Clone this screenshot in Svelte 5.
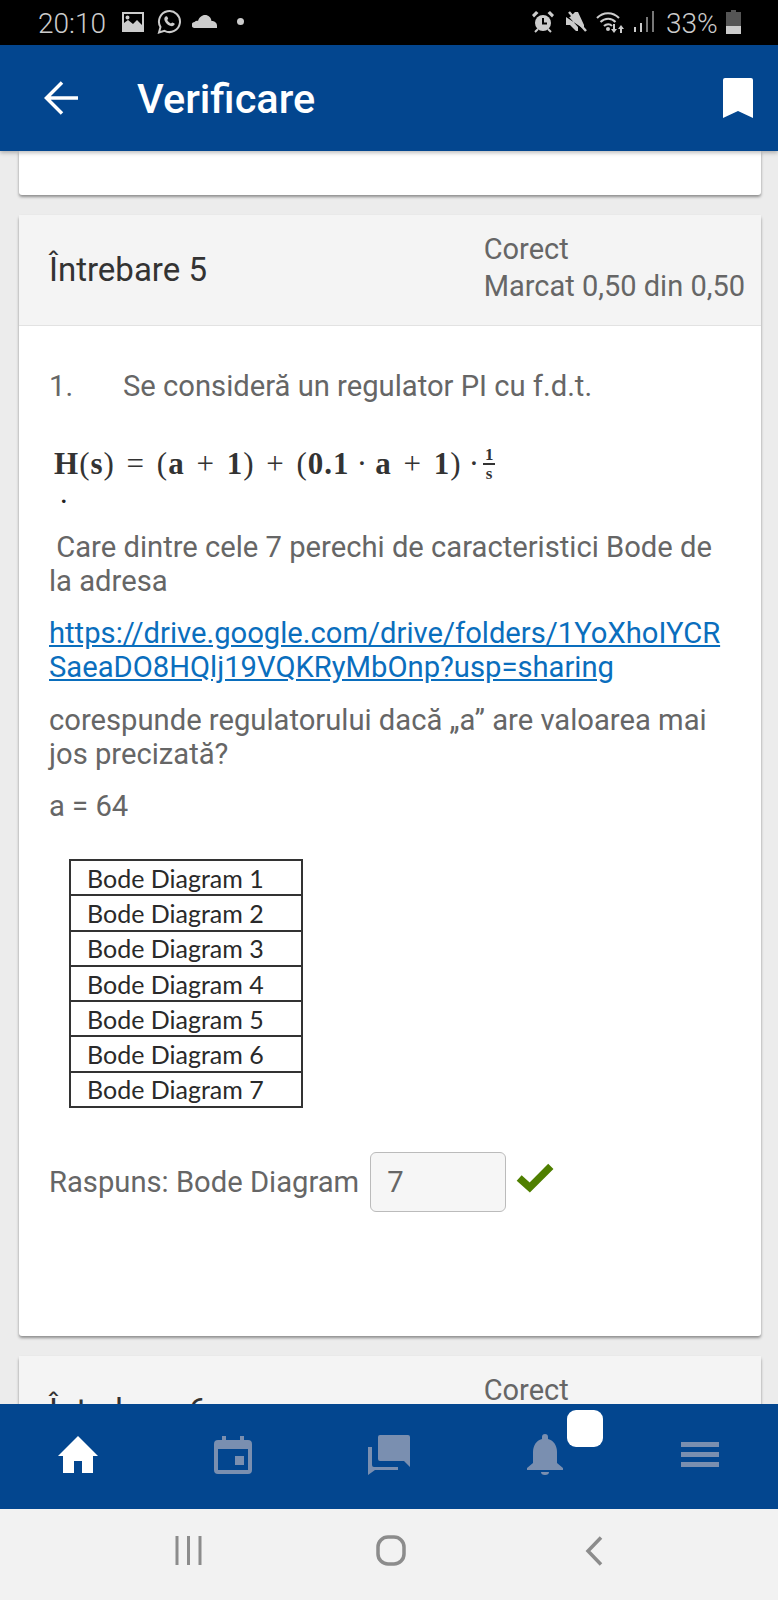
<script>
  const diagrams = [1, 2, 3, 4, 5, 6, 7];
</script>

<div class="phone">
  <div class="status">
    <span class="time">20:10</span>
    <svg class="st-img" viewBox="0 0 22 20"><path fill="#ccc" fill-rule="evenodd" d="M0 0h22v20H0zM2 2v9l4-3 5 4 4-4 5 5V2zM5.500 3.500a2 2 0 1 1 0 4 2 2 0 0 1 0-4z"/></svg>
    <svg class="st-wa" viewBox="0 0 24 24"><path fill="none" stroke="#ccc" stroke-width="2" d="M2 22.500l1.500-5.500A10.500 10.500 0 1 1 7.500 20.800z"/><path fill="#ccc" d="M8.500 6.500c1-.6 1.600-.4 2 .6l.7 1.600-1 1.400c.8 1.500 2 2.700 3.700 3.500l1.300-1.200 1.900.9c.7.4.7 1 .2 1.800-1 1.300-2.600 1.400-4.300.7-2.500-1-4.400-3-5.400-5.400-.6-1.600-.3-2.900.9-3.900z"/></svg>
    <svg class="st-cloud" viewBox="0 0 25 13"><path fill="#ccc" d="M3 13a3 3 0 0 1-.5-6C3.500 6 5 5.500 6 6c1-3.500 4-6 7-6 3.500 0 6 2.500 6.500 6 3-.3 5.500 2 5.500 4.500V13z"/></svg>
    <span class="st-dot"></span>
    <span class="grow"></span>
    <svg class="st-alarm" viewBox="0 0 22 22"><path fill="#ccc" d="M0 4l4-4 2.500 2-4.500 4.500zM22 4l-4-4-2.500 2 4.500 4.500z"/><circle cx="11" cy="12" r="8" fill="#ccc"/><path d="M3 21l3-3M19 21l-3-3" stroke="#ccc" stroke-width="2"/><path fill="none" stroke="#000" stroke-width="2" d="M11 7v5.500h4"/></svg>
    <svg class="st-mute" viewBox="0 0 21 21"><path fill="#ccc" d="M0 6h4l5-5h3l6 13v4zM0 6v8h4l6 6h2v-4L3 6z"/><path stroke="#ccc" stroke-width="2.500" d="M3 1l17 19"/></svg>
    <svg class="st-wifi" viewBox="0 0 31 22"><g fill="none" stroke="#ccc" stroke-width="2"><path d="M1 7c6-6.500 16-6.500 22 0M4.500 11c4.500-4.500 11-4.500 15 0M8 15c2.500-2.500 6-2.500 8 0"/></g><circle cx="12" cy="18" r="2" fill="#ccc"/><path fill="#ccc" d="M17 13h2v5h2l-3 4-3-4h2zM25 14l3 4h-2v4h-2v-4h-2z"/></svg>
    <svg class="st-signal" viewBox="0 0 20 21"><path fill="#ccc" d="M0 16h2v5H0zM6 12h2v9H6z"/><path fill="#777" d="M12 6h2v15h-2zM18 0h2v21h-2z"/></svg>
    <span class="pct">33%</span>
    <svg class="st-batt" viewBox="0 0 15 24"><path fill="#555" d="M5 0h5v2h5v14H0V2h5z"/><path fill="#ccc" d="M0 16h15v8H0z"/></svg>
  </div>

  <header class="topbar">
    <svg class="back" viewBox="0 0 34 34"><path fill="none" stroke="#fff" stroke-width="3.500" d="M34 17H3M18 1.500L2.500 17 18 32.500"/></svg>
    <h1>Verificare</h1>
    <svg class="bookmark" viewBox="0 0 30 40"><path fill="#fff" d="M2 0h26a2 2 0 0 1 2 2v38l-15-7-15 7V2a2 2 0 0 1 2-2z"/></svg>
  </header>

  <main class="scroll">
    <section class="card prev"></section>

    <section class="card">
      <div class="card-head">
        <div class="qname">Întrebare 5</div>
        <div class="qstate">Corect<br />Marcat 0,50 din 0,50</div>
      </div>
      <div class="card-body">
        <p class="lead"><span class="num">1.</span>Se consideră un regulator PI cu f.d.t.</p>
        <div class="formula">
          <span class="eq"><b>H</b>(<b>s</b>) = (<b>a</b> + <b>1</b>) + (<b>0.1</b>&thinsp;·&thinsp;<b>a</b> + <b>1</b>)&thinsp;·</span>
          <span class="frac"><b>1</b><b class="den">s</b></span>
        </div>
        <div class="eq-dot">.</div>
        <p class="care">&nbsp;Care dintre cele 7 perechi de caracteristici Bode de la adresa</p>
        <p class="link"><a href="#top">https://drive.google.com/drive/folders/1YoXhoIYCRSaeaDO8HQlj19VQKRyMbOnp?usp=sharing</a></p>
        <p class="cores">corespunde regulatorului dacă „a” are valoarea mai jos precizată?</p>
        <p class="aval">a = 64</p>
        <table class="bode">
          <tbody>
            {#each diagrams as d}
              <tr><td>Bode Diagram {d}</td></tr>
            {/each}
          </tbody>
        </table>
        <div class="answer">
          <span>Raspuns: Bode Diagram</span>
          <div class="input">7</div>
          <svg class="check" viewBox="0 0 36 28"><path fill="none" stroke="#4f7f00" stroke-width="7" d="M3 14l10 9L33 3"/></svg>
        </div>
      </div>
    </section>

    <section class="card">
      <div class="card-head">
        <div class="qname">Întrebare 6</div>
        <div class="qstate">Corect<br />Marcat 0,50 din 0,50</div>
      </div>
    </section>
  </main>

  <nav class="tabs">
    <div class="tab">
      <svg class="i-home" viewBox="0 0 40 37"><path fill="#fff" d="M20 0l20 20h-5v17H24V25h-8v12H5V20H0z"/></svg>
    </div>
    <div class="tab">
      <svg class="i-cal" viewBox="0 0 38 38"><path fill="#7a8fb0" fill-rule="evenodd" d="M8 0h4v4h14V0h4v4h4a4 4 0 0 1 4 4v26a4 4 0 0 1-4 4H4a4 4 0 0 1-4-4V8a4 4 0 0 1 4-4h4zM4 13v21h30V13z"/><path fill="#7a8fb0" d="M21 20h9v9h-9z"/></svg>
    </div>
    <div class="tab">
      <svg class="i-chat" viewBox="0 0 42 40"><path fill="#7a8fb0" d="M10 2a2 2 0 0 1 2-2h28a2 2 0 0 1 2 2v30l-6-6H12a2 2 0 0 1-2-2z"/><path fill="#7a8fb0" d="M0 12h4v18a2 2 0 0 0 2 2h24v3H7l-7 5z"/></svg>
    </div>
    <div class="tab bell-tab">
      <svg class="i-bell" viewBox="0 0 36 41"><path fill="#7a8fb0" d="M18 0a3 3 0 0 1 3 3v2c6 1.500 9 7 9 13v11l6 5v2H0v-2l6-5V18C6 12 9 6.500 15 5V3a3 3 0 0 1 3-3z"/><path fill="#7a8fb0" d="M14 38h8a4 3 0 0 1-8 0z"/></svg>
      <span class="badge"></span>
    </div>
    <div class="tab">
      <svg class="i-menu" viewBox="0 0 38 25"><path fill="#7a8fb0" d="M0 0h38v5H0zM0 10h38v5H0zM0 20h38v5H0z"/></svg>
    </div>
  </nav>

  <div class="sysnav">
    <svg class="s-recent" viewBox="0 0 27 29"><path stroke="#8c8c8c" stroke-width="3" d="M2 0v29M13.500 0v29M25 0v29"/></svg>
    <svg class="s-home" viewBox="0 0 30 31"><rect x="2" y="2" width="26" height="27" rx="10" fill="none" stroke="#8c8c8c" stroke-width="3.500"/></svg>
    <svg class="s-back" viewBox="0 0 18 30"><path fill="none" stroke="#8c8c8c" stroke-width="3.500" d="M16 1.500L3 15l13 13.500"/></svg>
  </div>
</div>

<style>
  :global(body) {
    margin: 0;
    background: #ececec;
  }

  .phone {
    width: 778px;
    height: 1600px;
    display: flex;
    flex-direction: column;
    overflow: hidden;
    font-family: Roboto, "Liberation Sans", sans-serif;
    color: #666;
  }

  .status {
    height: 45px;
    flex: none;
    background: #000;
    display: flex;
    align-items: center;
    padding: 0 37px 2px 38px;
    box-sizing: border-box;
    color: #ccc;
  }
  .time {
    font-size: 28px;
    font-weight: 300;
    width: 84px;
    margin-top: 3px;
  }
  .st-img { width: 22px; height: 20px; }
  .st-wa { width: 24px; height: 24px; margin-left: 13px; }
  .st-cloud { width: 25px; height: 13px; margin-left: 11px; }
  .st-dot {
    width: 7px;
    height: 7px;
    border-radius: 50%;
    background: #ccc;
    margin-left: 20px;
  }
  .grow { flex: 1; }
  .st-alarm { width: 22px; height: 22px; }
  .st-mute { width: 21px; height: 21px; margin-left: 12px; }
  .st-wifi { width: 31px; height: 22px; margin-left: 9px; }
  .st-signal { width: 20px; height: 21px; margin-left: 7px; }
  .pct {
    font-size: 28px;
    font-weight: 300;
    margin: 3px 0 0 12px;
    width: 60px;
  }
  .st-batt { width: 15px; height: 24px; }

  .topbar {
    height: 106px;
    flex: none;
    background: #03468f;
    display: flex;
    align-items: center;
    padding: 0 25px 0 44px;
    box-sizing: border-box;
    box-shadow: 0 2px 4px rgba(0, 0, 0, 0.25);
    position: relative;
    z-index: 1;
  }
  .back { width: 34px; height: 34px; }
  .topbar h1 {
    flex: 1;
    margin: 0 0 0 59px;
    font-size: 41.500px;
    font-weight: 500;
    color: #fff;
  }
  .bookmark { width: 30px; height: 40px; }

  .scroll {
    flex: 1;
    min-height: 0;
    overflow: hidden;
    padding: 0 17px 0 19px;
    background: #ececec;
  }

  .card {
    background: #fff;
    border-radius: 3px;
    box-shadow: 0 2px 3px rgba(0, 0, 0, 0.4);
    margin-bottom: 20px;
  }
  .prev {
    height: 44px;
    border-radius: 0 0 3px 3px;
  }

  .card-head {
    height: 111px;
    box-sizing: border-box;
    display: flex;
    align-items: center;
    justify-content: space-between;
    padding: 0 16px 0 30px;
    background: #f4f4f4;
    border-bottom: 1px solid #e2e2e2;
  }
  .qname {
    font-size: 33px;
    color: #333;
    font-weight: 400;
    margin-top: -2px;
  }
  .qstate {
    font-size: 29px;
    line-height: 37px;
    margin-top: -4px;
  }

  .card-body {
    padding: 43px 29px 0 30px;
    height: 1010px;
    box-sizing: border-box;
    font-size: 29.200px;
    line-height: 34px;
  }
  .card-body p { margin: 0; }
  .num {
    display: inline-block;
    width: 74px;
  }

  .formula {
    display: flex;
    align-items: center;
    margin: 34px 0 0 5px;
    height: 54px;
    font-family: "Liberation Serif", serif;
    color: #333;
    font-size: 31px;
  }
  .eq { white-space: pre; word-spacing: 3px; letter-spacing: 1px; }
  .frac {
    display: flex;
    flex-direction: column;
    align-items: center;
    margin-left: 3px;
    font-size: 17px;
    line-height: 17px;
  }
  .den { border-top: 2px solid #333; width: 12px; text-align: center; }
  .eq-dot {
    font-family: "Liberation Serif", serif;
    font-weight: 700;
    font-size: 22px;
    color: #222;
    line-height: 16px;
    margin: -3px 0 0 12px;
    height: 16px;
  }

  .care { margin-top: 26px !important; }
  .link { margin-top: 18px !important; word-break: break-all; }
  .link a { color: #0a6ebd; text-decoration: underline; }
  .cores { margin-top: 19px !important; }
  .aval { margin-top: 18px !important; }

  .bode {
    margin: 36px 0 0 20px;
    border-collapse: collapse;
    width: 234px;
    font-family: Lato, sans-serif;
    font-size: 25px;
    color: #2a2a2a;
    line-height: 30px;
  }
  .bode td {
    border: 2px solid #333;
    padding: 0 0 0 16px;
    height: 33.300px;
    white-space: nowrap;
  }

  .answer {
    display: flex;
    align-items: center;
    margin-top: 44px;
  }
  .input {
    width: 136px;
    height: 60px;
    box-sizing: border-box;
    margin-left: 11px;
    padding: 0 16px;
    display: flex;
    align-items: center;
    background: #f6f6f6;
    border: 1px solid #bbb;
    border-radius: 6px;
  }
  .check {
    width: 38px;
    height: 30px;
    margin: 0 0 8px 10px;
  }

  .tabs {
    height: 105px;
    flex: none;
    background: #03468f;
    display: grid;
    grid-template-columns: repeat(5, 1fr);
    position: relative;
    z-index: 1;
  }
  .tab {
    display: flex;
    align-items: center;
    justify-content: center;
    padding-bottom: 4px;
    position: relative;
  }
  .i-home { width: 40px; height: 37px; }
  .i-cal { width: 38px; height: 38px; }
  .i-chat { width: 42px; height: 40px; }
  .i-bell { width: 36px; height: 41px; }
  .i-menu { width: 38px; height: 25px; }
  .badge {
    position: absolute;
    left: 100px;
    top: 6px;
    width: 36px;
    height: 37px;
    border-radius: 9px;
    background: #fff;
  }

  .sysnav {
    height: 91px;
    flex: none;
    background: #f2f2f2;
    display: flex;
    align-items: center;
    justify-content: center;
    padding-bottom: 8px;
    box-sizing: border-box;
  }
  .s-recent { width: 27px; height: 29px; }
  .s-home { width: 30px; height: 31px; margin-left: 174px; }
  .s-back { width: 18px; height: 30px; margin-left: 179px; }
</style>
